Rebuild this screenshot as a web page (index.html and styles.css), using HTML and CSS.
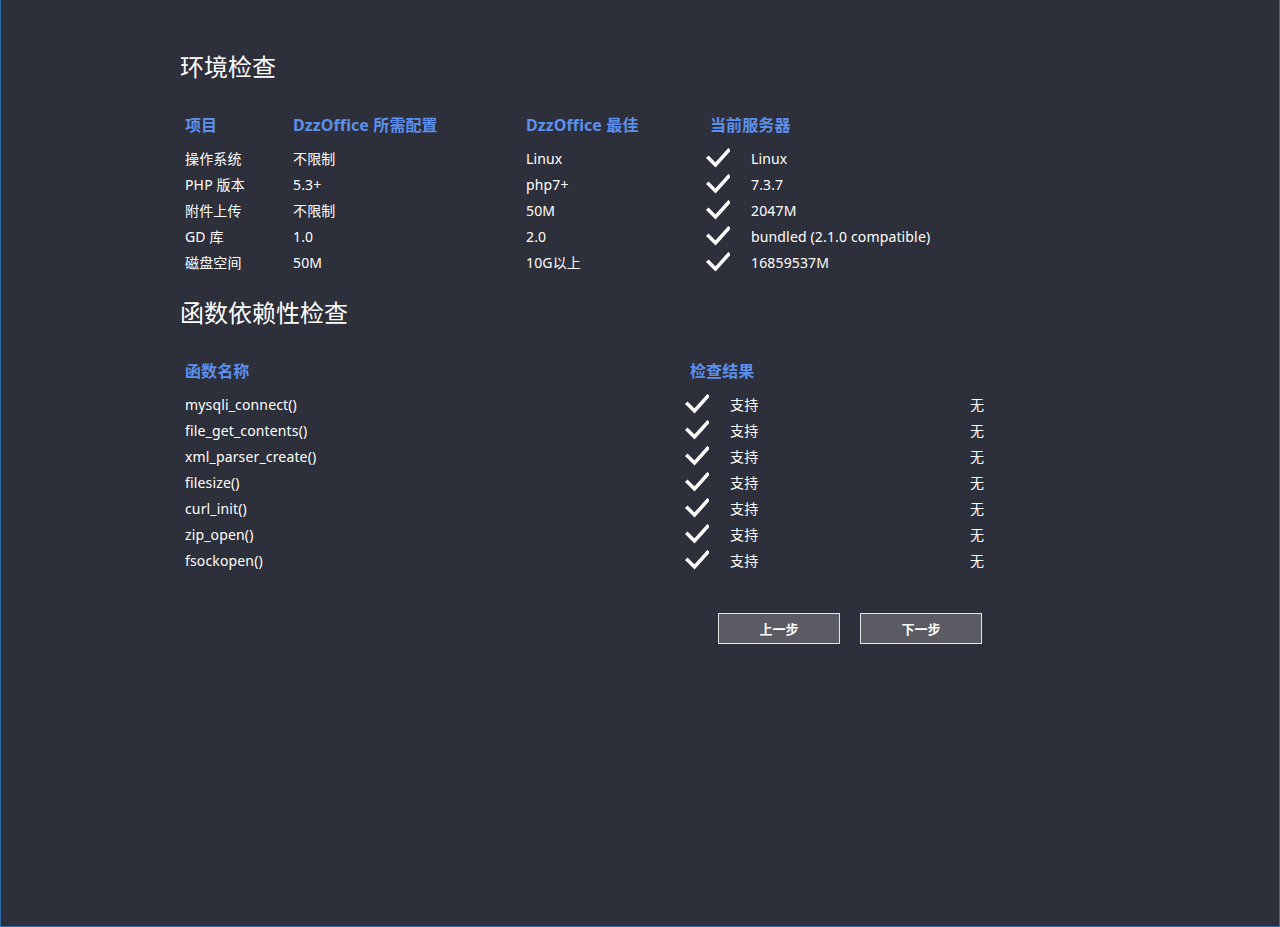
FILE: index.html
```html
<!DOCTYPE html>
<html lang="zh-CN">
<head>
<meta charset="utf-8">
<title>环境检查</title>
<link rel="stylesheet" href="styles.css">
</head>
<body>
<div class="page">
  <h2 class="title">环境检查</h2>
  <div class="env">
    <div class="row head">
      <div>项目</div><div>DzzOffice 所需配置</div><div>DzzOffice 最佳</div><div class="span2">当前服务器</div>
    </div>
    <div class="row"><div>操作系统</div><div>不限制</div><div>Linux</div><div class="ok"><svg viewBox="0 0 24 20"><polyline points="2.5,10 9.5,17 22.5,2.5"/></svg></div><div>Linux</div></div>
    <div class="row"><div>PHP 版本</div><div>5.3+</div><div>php7+</div><div class="ok"><svg viewBox="0 0 24 20"><polyline points="2.5,10 9.5,17 22.5,2.5"/></svg></div><div>7.3.7</div></div>
    <div class="row"><div>附件上传</div><div>不限制</div><div>50M</div><div class="ok"><svg viewBox="0 0 24 20"><polyline points="2.5,10 9.5,17 22.5,2.5"/></svg></div><div>2047M</div></div>
    <div class="row"><div>GD 库</div><div>1.0</div><div>2.0</div><div class="ok"><svg viewBox="0 0 24 20"><polyline points="2.5,10 9.5,17 22.5,2.5"/></svg></div><div>bundled (2.1.0 compatible)</div></div>
    <div class="row"><div>磁盘空间</div><div>50M</div><div>10G以上</div><div class="ok"><svg viewBox="0 0 24 20"><polyline points="2.5,10 9.5,17 22.5,2.5"/></svg></div><div>16859537M</div></div>
  </div>

  <h2 class="title second">函数依赖性检查</h2>
  <div class="func">
    <div class="row head">
      <div>函数名称</div><div class="span3">检查结果</div>
    </div>
    <div class="row"><div>mysqli_connect()</div><div class="ok"><svg viewBox="0 0 24 20"><polyline points="2.5,10 9.5,17 22.5,2.5"/></svg></div><div>支持</div><div>无</div></div>
    <div class="row"><div>file_get_contents()</div><div class="ok"><svg viewBox="0 0 24 20"><polyline points="2.5,10 9.5,17 22.5,2.5"/></svg></div><div>支持</div><div>无</div></div>
    <div class="row"><div>xml_parser_create()</div><div class="ok"><svg viewBox="0 0 24 20"><polyline points="2.5,10 9.5,17 22.5,2.5"/></svg></div><div>支持</div><div>无</div></div>
    <div class="row"><div>filesize()</div><div class="ok"><svg viewBox="0 0 24 20"><polyline points="2.5,10 9.5,17 22.5,2.5"/></svg></div><div>支持</div><div>无</div></div>
    <div class="row"><div>curl_init()</div><div class="ok"><svg viewBox="0 0 24 20"><polyline points="2.5,10 9.5,17 22.5,2.5"/></svg></div><div>支持</div><div>无</div></div>
    <div class="row"><div>zip_open()</div><div class="ok"><svg viewBox="0 0 24 20"><polyline points="2.5,10 9.5,17 22.5,2.5"/></svg></div><div>支持</div><div>无</div></div>
    <div class="row"><div>fsockopen()</div><div class="ok"><svg viewBox="0 0 24 20"><polyline points="2.5,10 9.5,17 22.5,2.5"/></svg></div><div>支持</div><div>无</div></div>
  </div>

  <div class="actions">
    <button class="btn" type="button">上一步</button>
    <button class="btn" type="button">下一步</button>
  </div>
</div>
</body>
</html>
```

FILE: styles.css
```css
* { box-sizing: border-box; }
html, body { margin: 0; padding: 0; }
body {
  background: #2d2f3a;
  color: #ffffff;
  font-family: "Noto Sans", "Noto Sans CJK SC", sans-serif;
  font-size: 14px;
}
.page {
  height: 927px;
  border: 1px solid #2a6db0;
  border-top: none;
  padding: 51px 0 0 179px;
}
.title {
  margin: 0;
  font-size: 24px;
  line-height: 32px;
  font-weight: normal;
  color: #ffffff;
}
.title.second { margin-top: 22px; }
.env, .func { margin-top: 29px; padding-left: 5px; }
.row {
  display: grid;
  height: 26px;
  line-height: 26px;
  padding-top: 1px;
  align-items: center;
  white-space: nowrap;
  letter-spacing: 0.15px;
}
.env .row { grid-template-columns: 108px 233px 180px 45px 300px; }
.func .row { grid-template-columns: 500px 45px 240px 40px; }
.row.head {
  color: #5d8fec;
  font-weight: bold;
  font-size: 16px;
  margin-bottom: 7px;
  padding-top: 0;
  letter-spacing: 0.1px;
}
.span2 { grid-column: span 2; padding-left: 4px; }
.span3 { grid-column: span 3; padding-left: 5px; }
.ok { display: flex; align-items: center; height: 26px; }
.ok svg {
  width: 24px;
  height: 20px;
  fill: none;
  stroke: #ffffff;
  stroke-width: 3.6;
  stroke-linecap: square;
  stroke-linejoin: miter;
  margin-top: -3px;
}
.actions {
  display: flex;
  gap: 20px;
  margin-top: 40px;
  padding-left: 538px;
}
.btn {
  width: 122px;
  height: 31px;
  background: #5a5b63;
  border: 1px solid #e6e6e6;
  color: #ffffff;
  font-family: "Noto Sans CJK SC", sans-serif;
  font-size: 13px;
  font-weight: bold;
  padding: 0;
  cursor: pointer;
}
```
